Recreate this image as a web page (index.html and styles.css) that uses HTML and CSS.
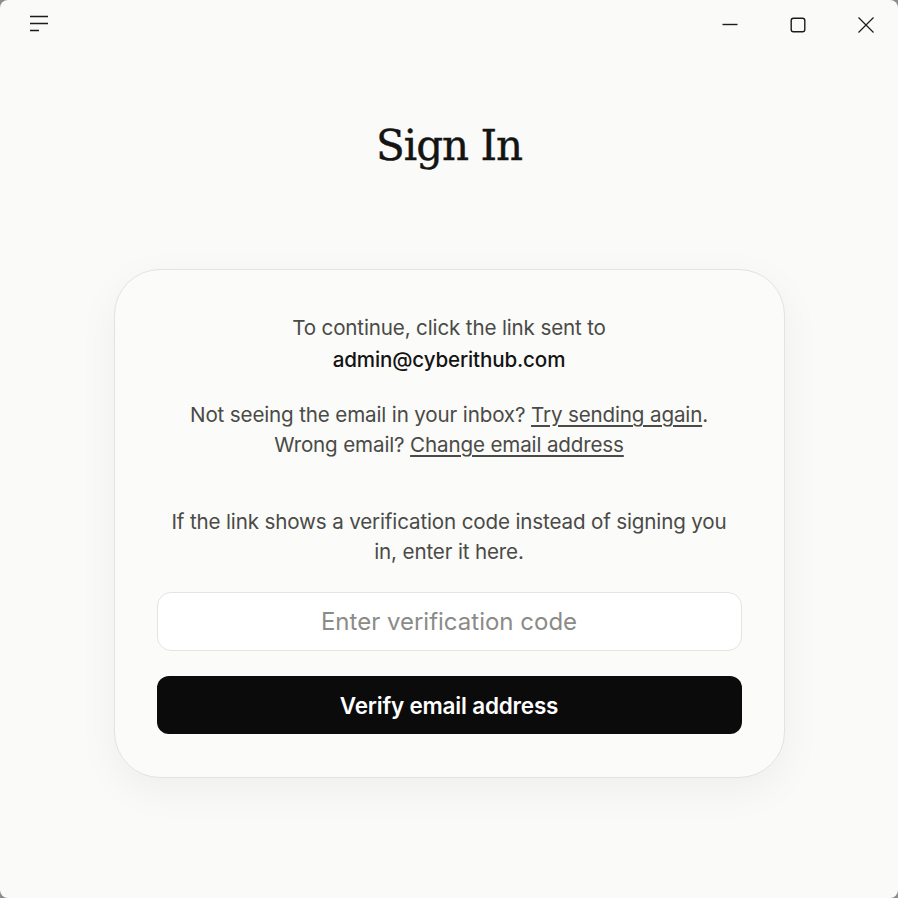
FILE: index.html
```html
<!DOCTYPE html>
<html>
<head>
<meta charset="utf-8">
<link rel="stylesheet" href="styles.css">
</head>
<body>
<div class="window">
  <div class="titlebar">
    <svg class="menu" width="20" height="18" viewBox="0 0 20 18">
      <path d="M0 1.5H18M0 8.5H18M0 15.5H9" stroke="#1b1b1b" stroke-width="1.4" fill="none"/>
    </svg>
    <div class="controls">
      <svg width="16" height="16" viewBox="0 0 16 16"><path d="M0.5 7.5H15.5" stroke="#1b1b1b" stroke-width="1.4" fill="none"/></svg>
      <svg width="16" height="16" viewBox="0 0 16 16"><rect x="1.2" y="1.2" width="13.6" height="13.6" rx="2.2" stroke="#1b1b1b" stroke-width="1.4" fill="none"/></svg>
      <svg width="16" height="16" viewBox="0 0 16 16"><path d="M0.5 0.5L15.5 15.5M15.5 0.5L0.5 15.5" stroke="#1b1b1b" stroke-width="1.2" fill="none"/></svg>
    </div>
  </div>
  <main class="content">
    <h1 class="title">Sign In</h1>
    <div class="card">
      <p class="para first">To continue, click the link sent to<br><span class="email">admin@cyberithub.com</span></p>
      <p class="para second">Not seeing the email in your inbox? <a class="link">Try sending again</a>.<br>Wrong email? <a class="link">Change email address</a></p>
      <p class="para third">If the link shows a verification code instead of signing you in, enter it here.</p>
      <div class="input">Enter verification code</div>
      <div class="button">Verify email address</div>
    </div>
  </main>
</div>
</body>
</html>
```

FILE: styles.css
```css
* { box-sizing: border-box; }
html, body { margin: 0; padding: 0; }
body {
  background: #8c8c8c;
  width: 898px;
  height: 898px;
  overflow: hidden;
}
.window {
  width: 898px;
  height: 898px;
  background: #fafaf8;
  border-radius: 8px;
  overflow: hidden;
  font-family: Inter, "Noto Sans", sans-serif;
  color: #4a4a47;
}
.titlebar {
  height: 50px;
  display: flex;
  justify-content: space-between;
  align-items: flex-start;
}
.menu {
  margin-left: 30px;
  margin-top: 15px;
}
.controls {
  display: flex;
  gap: 52px;
  padding-right: 24px;
  margin-top: 17px;
}
.controls svg { display: block; }
.content {
  display: flex;
  flex-direction: column;
  align-items: center;
}
.title {
  margin: 66px 0 0 0;
  font-family: "DejaVu Serif", serif;
  font-weight: 400;
  font-size: 42px;
  line-height: 60px;
  color: #141413;
  letter-spacing: -1px;
  -webkit-text-stroke: 0.4px #141413;
}
.card {
  margin-top: 93px;
  width: 671px;
  background: #fbfbf9;
  border: 1px solid #e3e3df;
  border-radius: 46px;
  box-shadow: 0 12px 40px rgba(0,0,0,0.05);
  padding: 42px 42px 43px 42px;
  display: flex;
  flex-direction: column;
  align-items: stretch;
}
.para {
  margin: 0;
  text-align: center;
  font-size: 20.6px;
  line-height: 30px;
  letter-spacing: -0.15px;
}
.first { line-height: 32px; }
.email { color: #141413; font-weight: 500; }
.second { margin-top: 24px; }
.third { margin-top: 47px; padding: 0 8px; }
.link {
  color: #4a4a47;
  text-decoration: underline;
  text-decoration-thickness: 1.5px;
  text-underline-offset: 3px;
}
.input {
  margin-top: 25px;
  height: 59px;
  background: #ffffff;
  border: 1.5px solid #e4e4e0;
  border-radius: 14px;
  display: flex;
  align-items: center;
  justify-content: center;
  font-size: 24px;
  color: #8b8b87;
}
.button {
  margin-top: 25px;
  height: 58px;
  background: #0b0b0b;
  border-radius: 12px;
  display: flex;
  align-items: center;
  justify-content: center;
  font-size: 22.5px;
  font-weight: 600;
  color: #ffffff;
  letter-spacing: -0.2px;
}
```
